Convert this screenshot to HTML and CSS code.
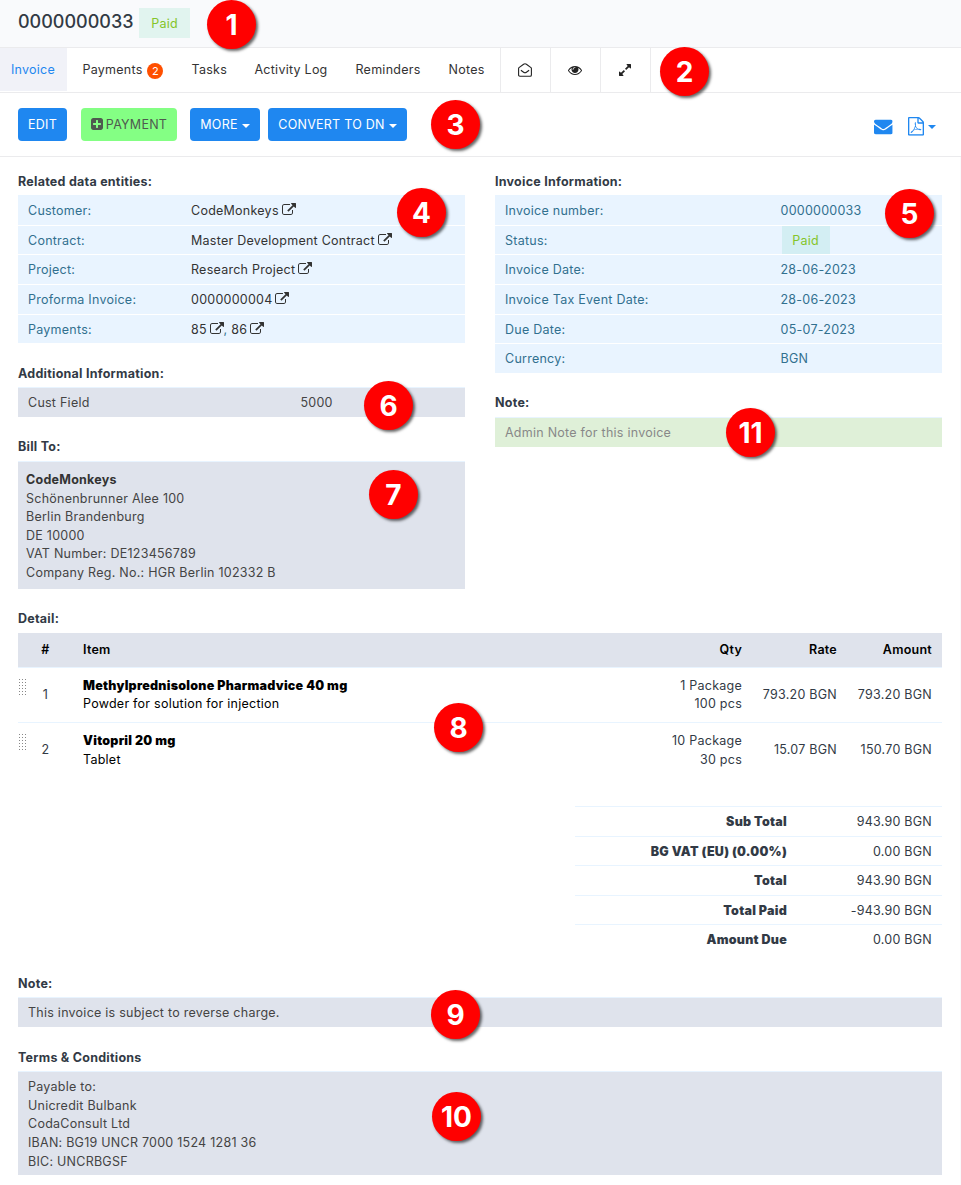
FILE: index.html
```
<!DOCTYPE html>
<html lang="en">
<head>
  <meta charset="UTF-8">
  <meta name="viewport" content="width=device-width, initial-scale=1.0">
  <title>Invoice 0000000033</title>
  <link rel="stylesheet" href="styles.css">
</head>
<body>
  <svg class="sprite" aria-hidden="true">
    <symbol id="external" viewBox="0 0 1792 1792"><path d="M1408 928v320q0 119-84.5 203.5t-203.5 84.5h-832q-119 0-203.5-84.5t-84.5-203.5v-832q0-119 84.5-203.5t203.5-84.5h704q14 0 23 9t9 23v64q0 14-9 23t-23 9h-704q-66 0-113 47t-47 113v832q0 66 47 113t113 47h832q66 0 113-47t47-113v-320q0-14 9-23t23-9h64q14 0 23 9t9 23zm384-864v512q0 26-19 45t-45 19-45-19l-176-176-652 652q-10 10-23 10t-23-10l-114-114q-10-10-10-23t10-23l652-652-176-176q-19-19-19-45t19-45 45-19h512q26 0 45 19t19 45z"/></symbol>
    <symbol id="plus" viewBox="128 0 1536 1792"><path d="M1408 960v-128q0-26-19-45t-45-19h-320v-320q0-26-19-45t-45-19h-128q-26 0-45 19t-19 45v320h-320q-26 0-45 19t-19 45v128q0 26 19 45t45 19h320v320q0 26 19 45t45 19h128q26 0 45-19t19-45v-320h320q26 0 45-19t19-45zm256-544v960q0 119-84.5 203.5t-203.5 84.5h-960q-119 0-203.5-84.5t-84.5-203.5v-960q0-119 84.5-203.5t203.5-84.5h960q119 0 203.5 84.5t84.5 203.5z"/></symbol>
    <symbol id="eye" viewBox="0 0 1792 1792"><path d="M1664 960q-152-236-381-353 61 104 61 225 0 185-131.5 316.5t-316.5 131.5-316.5-131.5-131.5-316.5q0-121 61-225-229 117-381 353 133 205 333.5 326.5t434.5 121.5 434.5-121.5 333.5-326.5zm-720-384q0-20-14-34t-34-14q-125 0-214.5 89.5t-89.5 214.5q0 20 14 34t34 14 34-14 14-34q0-86 61-147t147-61q20 0 34-14t14-34zm848 384q0 34-20 69-140 230-376.5 368.5t-499.5 138.5-499.5-139-376.5-368q-20-35-20-69t20-69q140-229 376.5-368t499.5-139 499.5 139 376.5 368q20 35 20 69z"/></symbol>
    <symbol id="expand" viewBox="0 0 1792 1792"><path d="M883 1056q0 13-10 23l-332 332 144 144q19 19 19 45t-19 45-45 19h-448q-26 0-45-19t-19-45v-448q0-26 19-45t45-19 45 19l144 144 332-332q10-10 23-10t23 10l114 114q10 10 10 23zm781-864v448q0 26-19 45t-45 19-45-19l-144-144-332 332q-10 10-23 10t-23-10l-114-114q-10-10-10-23t10-23l332-332-144-144q-19-19-19-45t19-45 45-19h448q26 0 45 19t19 45z"/></symbol>
    <symbol id="mail" viewBox="0 0 1792 1792"><path d="M1792 710v794q0 66-47 113t-113 47h-1472q-66 0-113-47t-47-113v-794q44 49 101 87 362 246 497 345 57 42 92.5 65.5t94.5 48 110 24.5h2q51 0 110-24.5t94.5-48 92.5-65.5q170-123 498-345 57-39 100-87zm0-294q0 79-49 151t-122 123q-376 261-468 325-10 7-42.5 31t-54 38.5-52 32.5-57.5 27-50 9h-2q-23 0-50-9t-57.5-27-52-32.5-54-38.5-42.5-31q-91-64-262-182.5t-205-142.5q-62-42-117-115.5t-55-136.5q0-78 41.5-130t118.5-52h1472q65 0 112.5 47t47.5 113z"/></symbol>
    <symbol id="mail-open" viewBox="0 0 14 14"><path d="M.6 12V5.400Q.6 4.900 1 4.600L5.600 1.200Q7 .3 8.400 1.200L13 4.600q.4.3.4.8V12q0 1.300-1.300 1.300H1.900Q.6 13.300.6 12zM2.900 7.300l2.700 2q1.400 1 2.800 0l2.700-2" fill="none" stroke="currentColor" stroke-width="1.100"/></symbol>
    <symbol id="pdf" viewBox="128 0 1536 1792"><path d="M1596 380q28 28 48 76t20 88v1152q0 40-28 68t-68 28h-1344q-40 0-68-28t-28-68v-1600q0-40 28-68t68-28h896q40 0 88 20t76 48zm-444-244v376h376q-10-29-22-41l-313-313q-12-12-41-22zm384 1528v-1024h-416q-40 0-68-28t-28-68v-416h-768v1536h1280zm-514-593q33 26 84 56 59-7 117-7 147 0 177 49 16 22 2 52 0 1-1 2l-2 2v1q-6 38-71 38-48 0-115-20t-130-53q-221 24-392 83-153 262-242 262-15 0-28-7l-24-12q-1-1-6-5-10-10-6-36 9-40 56-91.5t132-96.5q14-9 23 6 2 2 2 4 52-85 107-197 68-136 104-262-24-82-30.5-159.5t6.500-127.500q11-40 42-40h22q23 0 35 15 18 21 9 68-2 6-4 8 1 3 1 8v30q-2 123-14 192 55 164 146 238zm-576 411q52-24 137-158-51 40-87.500 84t-49.500 74zm398-920q-15 42-2 132 1-7 7-44 0-3 7-43 1-4 4-8-1-1-1-2-1-2-1-3-1-22-13-36 0 1-1 2v2zm-124 661q135-54 284-81-2-1-13-9.500t-16-13.500q-76-67-127-176-27 86-83 197-30 56-45 83zm646-16q-24-24-140-24 76 28 124 28 14 0 18-1 0-1-2-3z"/></symbol>
  </svg>

  <header class="page-header">
    <h1>0000000033</h1>
    <span class="status">Paid</span>
  </header>

  <nav class="tabs">
    <a class="tab tab-invoice active">Invoice</a>
    <a class="tab tab-payments">Payments <span class="count">2</span></a>
    <a class="tab tab-tasks">Tasks</a>
    <a class="tab tab-log">Activity Log</a>
    <a class="tab tab-reminders">Reminders</a>
    <a class="tab tab-notes">Notes</a>
    <a class="tab-icon"><svg class="icon"><use href="#mail-open"/></svg></a>
    <a class="tab-icon"><svg class="icon"><use href="#eye"/></svg></a>
    <a class="tab-icon last"><svg class="icon"><use href="#expand"/></svg></a>
  </nav>

  <div class="toolbar">
    <button class="btn btn-edit">Edit</button>
    <button class="btn btn-payment"><svg class="icon icon-narrow"><use href="#plus"/></svg>Payment</button>
    <button class="btn btn-more">More<i class="caret"></i></button>
    <button class="btn btn-convert">Convert to DN<i class="caret"></i></button>
    <div class="toolbar-right">
      <svg class="icon-lg"><use href="#mail"/></svg>
      <svg class="icon-lg icon-pdf"><use href="#pdf"/></svg>
      <i class="caret"></i>
    </div>
  </div>

  <main class="content">
    <div class="columns">
      <section>
        <h4>Related data entities:</h4>
        <dl class="info related">
          <div><dt>Customer:</dt><dd><a>CodeMonkeys <svg class="icon"><use href="#external"/></svg></a></dd></div>
          <div><dt>Contract:</dt><dd><a>Master Development Contract <svg class="icon"><use href="#external"/></svg></a></dd></div>
          <div><dt>Project:</dt><dd><a>Research Project <svg class="icon"><use href="#external"/></svg></a></dd></div>
          <div><dt>Proforma Invoice:</dt><dd><a>0000000004 <svg class="icon"><use href="#external"/></svg></a></dd></div>
          <div><dt>Payments:</dt><dd><a>85 <svg class="icon"><use href="#external"/></svg></a>, <a>86 <svg class="icon"><use href="#external"/></svg></a></dd></div>
        </dl>

        <h4>Additional Information:</h4>
        <dl class="info grey">
          <div><dt>Cust Field</dt><dd>5000</dd></div>
        </dl>

        <h4>Bill To:</h4>
        <address class="box bill">
          <b>CodeMonkeys</b><br>
          Schönenbrunner Alee 100<br>
          Berlin Brandenburg<br>
          DE 10000<br>
          VAT Number: DE123456789<br>
          Company Reg. No.: HGR Berlin 102332 B
        </address>
      </section>

      <section>
        <h4>Invoice Information:</h4>
        <dl class="info">
          <div><dt>Invoice number:</dt><dd>0000000033</dd></div>
          <div><dt>Status:</dt><dd class="status-cell"><span class="status small">Paid</span></dd></div>
          <div><dt>Invoice Date:</dt><dd>28-06-2023</dd></div>
          <div><dt>Invoice Tax Event Date:</dt><dd>28-06-2023</dd></div>
          <div><dt>Due Date:</dt><dd>05-07-2023</dd></div>
          <div><dt>Currency:</dt><dd>BGN</dd></div>
        </dl>

        <h4>Note:</h4>
        <div class="box admin-note">Admin Note for this invoice</div>
      </section>
    </div>

    <h4>Detail:</h4>
    <table class="items">
      <thead>
        <tr><th class="col-num">#</th><th class="col-item">Item</th><th class="col-qty">Qty</th><th class="col-rate">Rate</th><th>Amount</th></tr>
      </thead>
      <tbody>
        <tr>
          <td class="col-num"><div class="num"><span class="grip"></span>1</div></td>
          <td class="col-item"><b>Methylprednisolone Pharmadvice 40 mg</b><br>Powder for solution for injection</td>
          <td>1 Package<br>100 pcs</td>
          <td>793.20 BGN</td>
          <td>793.20 BGN</td>
        </tr>
        <tr>
          <td class="col-num"><div class="num"><span class="grip"></span>2</div></td>
          <td class="col-item"><b>Vitopril 20 mg</b><br>Tablet</td>
          <td>10 Package<br>30 pcs</td>
          <td>15.07 BGN</td>
          <td>150.70 BGN</td>
        </tr>
      </tbody>
    </table>

    <dl class="totals">
      <div><dt>Sub Total</dt><dd>943.90 BGN</dd></div>
      <div><dt>BG VAT (EU) (0.00%)</dt><dd>0.00 BGN</dd></div>
      <div><dt>Total</dt><dd>943.90 BGN</dd></div>
      <div><dt>Total Paid</dt><dd>-943.90 BGN</dd></div>
      <div><dt>Amount Due</dt><dd>0.00 BGN</dd></div>
    </dl>

    <h4>Note:</h4>
    <div class="box">This invoice is subject to reverse charge.</div>

    <h4>Terms &amp; Conditions</h4>
    <div class="box">
      Payable to:<br>
      Unicredit Bulbank<br>
      CodaConsult Ltd<br>
      IBAN: BG19 UNCR 7000 1524 1281 36<br>
      BIC: UNCRBGSF
    </div>
  </main>

  <!-- numbered callouts laid over the page -->
  <span class="marker m1">1</span>
  <span class="marker m2">2</span>
  <span class="marker m3">3</span>
  <span class="marker m4">4</span>
  <span class="marker m5">5</span>
  <span class="marker m6">6</span>
  <span class="marker m7">7</span>
  <span class="marker m8">8</span>
  <span class="marker m9">9</span>
  <span class="marker m10">10</span>
  <span class="marker m11">11</span>
</body>
</html>
```
FILE: styles.css
```
:root {
  --blue: #1f87f0;
  --text: #323a45;
  --link: #333;
  --info: #31708f;
  --info-bg: #e9f4ff;
  --grey-bg: #dfe3ec;
  --line: #e8f4ff;
}

* {
  box-sizing: border-box;
  margin: 0;
  padding: 0;
}

body {
  position: relative;
  width: 961px;
  height: 1185px;
  overflow: hidden;
  font-family: Inter, sans-serif;
  font-size: 12.5px;
  letter-spacing: 0.25px;
  line-height: 18.57px;
  color: var(--text);
  background: #fff;
}

.sprite {
  display: none;
}

.icon {
  width: 14px;
  height: 14px;
  margin-left: -1px;
  fill: currentColor;
  vertical-align: -2px;
}

.page-header {
  display: flex;
  align-items: flex-start;
  height: 48px;
  padding: 8px 18px 0;
  background: #f9fafc;
  border-bottom: 1px solid #ebebed;
}

h1 {
  font-size: 18px;
  font-weight: 500;
  letter-spacing: 0;
  line-height: 28px;
  width: 121px;
}

.status {
  width: 51px;
  height: 30px;
  line-height: 32px;
  text-align: center;
  color: #84c529;
  background: #e1f4ef;
}

.status.small {
  display: block;
  width: 48px;
  height: 28px;
  line-height: 30px;
  background: #d3eef3;
}

.tabs {
  display: flex;
  height: 45px;
  border-bottom: 1px solid #ebebed;
}

.tab {
  height: 43px;
  line-height: 43px;
  color: var(--link);
  white-space: nowrap;
}

.tab.active {
  color: var(--blue);
  background: #f1f2f8;
}

.tab-invoice {
  width: 67px;
  padding-left: 11px;
}

.tab-payments {
  width: 124.5px;
  padding-left: 15.5px;
}

.tab-tasks {
  width: 63px;
}

.tab-log {
  width: 101px;
}

.tab-reminders {
  width: 93px;
}

.tab-notes {
  width: 51.5px;
}

.count {
  display: inline-block;
  width: 16px;
  height: 16px;
  margin-left: 1px;
  line-height: 16px;
  font-size: 11px;
  letter-spacing: 0;
  text-align: center;
  color: #fff;
  background: #ff4f00;
  border-radius: 50%;
  vertical-align: -1px;
}

.tab-icon {
  display: flex;
  justify-content: center;
  align-items: center;
  width: 50px;
  padding: 0 1px 1px 0;
  color: #222;
  border-left: 1px solid #ebebed;
}

.tab-icon.last {
  width: 51px;
  border-right: 1px solid #ebebed;
}

.toolbar {
  display: flex;
  align-items: flex-start;
  height: 64px;
  padding: 15px 25px 0 18px;
  border-bottom: 1px solid #ebebed;
}

.btn {
  display: flex;
  align-items: center;
  justify-content: center;
  height: 33px;
  padding-top: 1.5px;
  font: inherit;
  letter-spacing: inherit;
  text-transform: uppercase;
  color: #fff;
  background: var(--blue);
  border: none;
  border-radius: 4px;
}

.btn-edit {
  width: 49px;
  margin-right: 14px;
}

.btn-payment {
  width: 96px;
  margin-right: 13px;
  color: #4f5a4f;
  background: #84ff84;
}

.icon-narrow {
  width: 12px;
  margin: -2px 3px 0 0;
}

.btn-more {
  width: 70px;
  margin-right: 8px;
}

.btn-convert {
  width: 139px;
}

.caret {
  border-top: 4px solid;
  border-left: 4px solid transparent;
  border-right: 4px solid transparent;
}

.btn .caret {
  margin: 1px 0 0 4px;
}

.toolbar-right {
  display: flex;
  align-items: center;
  height: 37px;
  margin-left: auto;
  color: var(--blue);
}

.icon-lg {
  width: 18.67px;
  height: 18.67px;
  fill: currentColor;
}

.icon-pdf {
  width: 16px;
  margin: 0 4px 0 15px;
}

.content {
  height: 1028px;
  padding: 14.8px 18px 0;
  border-right: 1px solid #f9fafc;
}

.columns {
  display: grid;
  grid-template-columns: 447px 447px;
  gap: 30px;
}

.columns h4:first-child {
  margin-top: 0.8px;
}

h4 {
  margin: 21.5px 0 4.2px;
  font-size: 12.5px;
  font-weight: 700;
}

.info > div {
  display: flex;
  height: 29.57px;
  padding: 6px 10px 4px;
  color: var(--info);
  background: var(--info-bg);
  border-top: 1px solid #fff;
}

.info > div:first-child {
  border-top-color: var(--line);
}

.info dt {
  width: 275.5px;
}

.info.related dt {
  width: 163px;
}

.info a {
  color: var(--link);
}

.info.grey dt {
  width: 272.5px;
}

.info.grey > div {
  color: #444;
  background: var(--grey-bg);
}

.status-cell {
  margin: -6px 0 -5px 1px;
}

.box {
  padding: 6px 10px 4px;
  color: #444;
  background: var(--grey-bg);
  border-top: 1px solid var(--line);
}

.bill {
  padding: 8.8px 8px 6.6px;
  font-style: normal;
}

.bill b {
  font-weight: 700;
  color: #333;
}

.admin-note {
  color: #888;
  background: #dff0d8;
}

.items {
  width: 924px;
  border-collapse: collapse;
  table-layout: fixed;
}

.items th {
  height: 34px;
  padding: 1.5px 10px 0;
  font-weight: 600;
  color: #000;
  text-align: right;
  background: var(--grey-bg);
}

.items td {
  height: 55px;
  padding: 1.3px 10px 0;
  text-align: right;
  border-top: 1px solid var(--line);
}

.items .col-num {
  width: 55px;
  padding-left: 0;
  padding-right: 0;
  text-align: center;
}

.items .col-item {
  color: #000;
  text-align: left;
}

.col-item b {
  font-weight: 900;
}

.col-qty {
  width: 124px;
}

.col-rate,
.items th:last-child {
  width: 95px;
}

.num {
  position: relative;
}

.grip {
  position: absolute;
  left: 0;
  top: -8px;
  width: 9px;
  height: 18px;
  background: radial-gradient(circle, #888 0.6px, transparent 0.8px) 0 0 / 3px 3px;
}

.totals {
  width: 367px;
  height: 147px;
  margin: 29px 0 0 auto;
}

.totals > div {
  display: flex;
  height: 29.5px;
  padding: 6px 10px 4px;
  border-top: 1px solid var(--line);
}

.totals dt {
  width: 202px;
  font-weight: 900;
  text-align: right;
}

.totals dd {
  flex: 1;
  text-align: right;
}

.marker {
  position: absolute;
  width: 49px;
  height: 49px;
  line-height: 51px;
  font-size: 28px;
  font-weight: 700;
  letter-spacing: 0;
  text-align: center;
  color: #fff;
  background: #f00;
  border-radius: 50%;
  box-shadow: 2px 2px 3px rgba(0, 0, 0, 0.6);
}

.m1 { left: 207px; top: 0; }
.m2 { left: 660px; top: 47px; }
.m3 { left: 431px; top: 100px; }
.m4 { left: 397px; top: 188px; }
.m5 { left: 885px; top: 189px; }
.m6 { left: 364px; top: 381px; }
.m7 { left: 369px; top: 470px; }
.m8 { left: 434px; top: 703px; }
.m9 { left: 431px; top: 990px; }
.m10 { left: 432px; top: 1092px; }
.m11 { left: 726px; top: 408px; }
```
